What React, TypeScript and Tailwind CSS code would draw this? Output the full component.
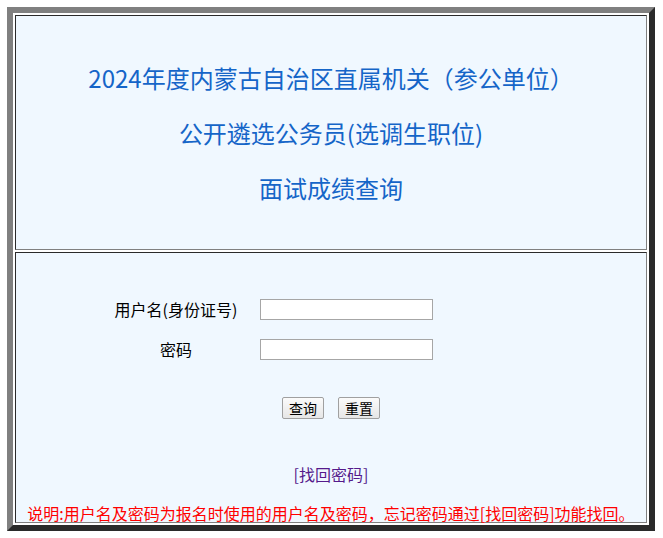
const font = "font-['Noto_Sans_CJK_SC','Noto_Sans',sans-serif]";

const cell =
  "border border-t-[#2a2a2a] border-l-[#2a2a2a] border-r-[#808080] border-b-[#808080] bg-[#f0f8ff]";

function Field({ label }: { label: string }) {
  return (
    <div className="flex items-center h-[21px]">
      <span className="w-[152px] text-center text-[16px] leading-[21px] text-black">{label}</span>
      <input
        type="text"
        className="ml-[8px] w-[173px] h-[21px] border border-[#a6a6a6] bg-white outline-none"
      />
    </div>
  );
}

export default function App() {
  return (
    <div className={`${font} bg-white w-[663px] h-[538px] p-[7px]`}>
      <div className="w-[648px] h-[524px] border-[6px] border-t-[#808080] border-l-[#808080] border-r-[#2a2a2a] border-b-[#2a2a2a] p-[2px] flex flex-col gap-[2px]">
        {/* 标题 */}
        <div className={`${cell} h-[235px] flex flex-col items-center pt-[46px] gap-[23px] text-[24px] leading-[32px] text-[#1565c8]`}>
          <p>2024年度内蒙古自治区直属机关（参公单位）</p>
          <p>公开遴选公务员(选调生职位)</p>
          <p>面试成绩查询</p>
        </div>

        {/* 登录表单 */}
        <div className={`${cell} h-[271px] flex flex-col`}>
          <div className="pt-[46px] pl-[84px] flex flex-col gap-[19px]">
            <Field label="用户名(身份证号)" />
            <Field label="密码" />
          </div>
          <div className="mt-[37px] flex justify-center gap-[14px]">
            <button className="h-[22px] px-[6px] text-[14px] leading-[20px] text-black border border-[#a0a0a0] rounded-[2px] bg-gradient-to-b from-[#fbfbfb] to-[#e6e6e6]">
              查询
            </button>
            <button className="h-[22px] px-[6px] text-[14px] leading-[20px] text-black border border-[#a0a0a0] rounded-[2px] bg-gradient-to-b from-[#fbfbfb] to-[#e6e6e6]">
              重置
            </button>
          </div>
          <div className="mt-[45px] text-center text-[16px] leading-[20px]">
            <a className="text-[#551a8b]">[找回密码]</a>
          </div>
          <p className="mt-[19px] text-center text-[16px] leading-[20px] text-[#ff0000]">
            说明:用户名及密码为报名时使用的用户名及密码，忘记密码通过[找回密码]功能找回。
          </p>
        </div>
      </div>
    </div>
  );
}
